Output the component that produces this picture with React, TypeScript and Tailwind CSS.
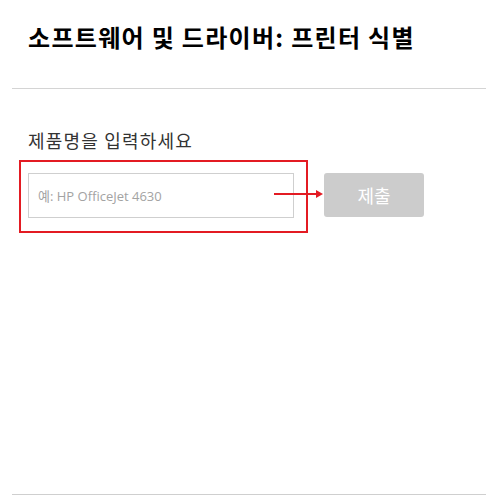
export default function App() {
  return (
    <div
      className="h-[495px] w-[486px] overflow-hidden bg-white pl-3"
      style={{ fontFamily: '"Noto Sans CJK KR", "Noto Sans", sans-serif' }}
    >
      <div className="pl-4 pt-[19px]">
        <h1 className="text-[24px] font-bold leading-[36px] tracking-[1.3px] text-black">
          소프트웨어 및 드라이버: 프린터 식별
        </h1>
      </div>

      <div className="mt-[33px] border-t border-[#d4d4d4]" />

      <div className="pl-4 pt-[38px]">
        <label className="block text-[18px] leading-[26px] tracking-[1.2px] text-[#333]">제품명을 입력하세요</label>

        <div className="mt-[20px] flex items-start">
          <div className="relative">
            <div className="pointer-events-none absolute left-[-9px] top-[-13px] h-[73px] w-[289px] border-2 border-[#e31b23]" />
            <input
              type="text"
              placeholder="예: HP OfficeJet 4630"
              className="block h-[45px] w-[266px] border border-[#cfcfcf] bg-white px-[9px] text-[13px] text-[#333] outline-none placeholder:text-[#a3a3a3]"
              style={{ fontFamily: '"Open Sans", "Noto Sans CJK KR", sans-serif' }}
            />
            <svg
              className="pointer-events-none absolute left-[246px] top-[16px]"
              width="50"
              height="10"
              viewBox="0 0 50 10"
            >
              <line x1="0" y1="5" x2="44" y2="5" stroke="#e31b23" strokeWidth="2" />
              <path d="M42 1 L49 5 L42 9 Z" fill="#e31b23" />
            </svg>
          </div>
          <button className="ml-[30px] h-[44px] w-[100px] rounded-[3px] bg-[#cccccc] text-[18px] text-white">
            제출
          </button>
        </div>
      </div>

      <div className="mt-[276px] border-t border-[#cfcfcf]" />
    </div>
  );
}
